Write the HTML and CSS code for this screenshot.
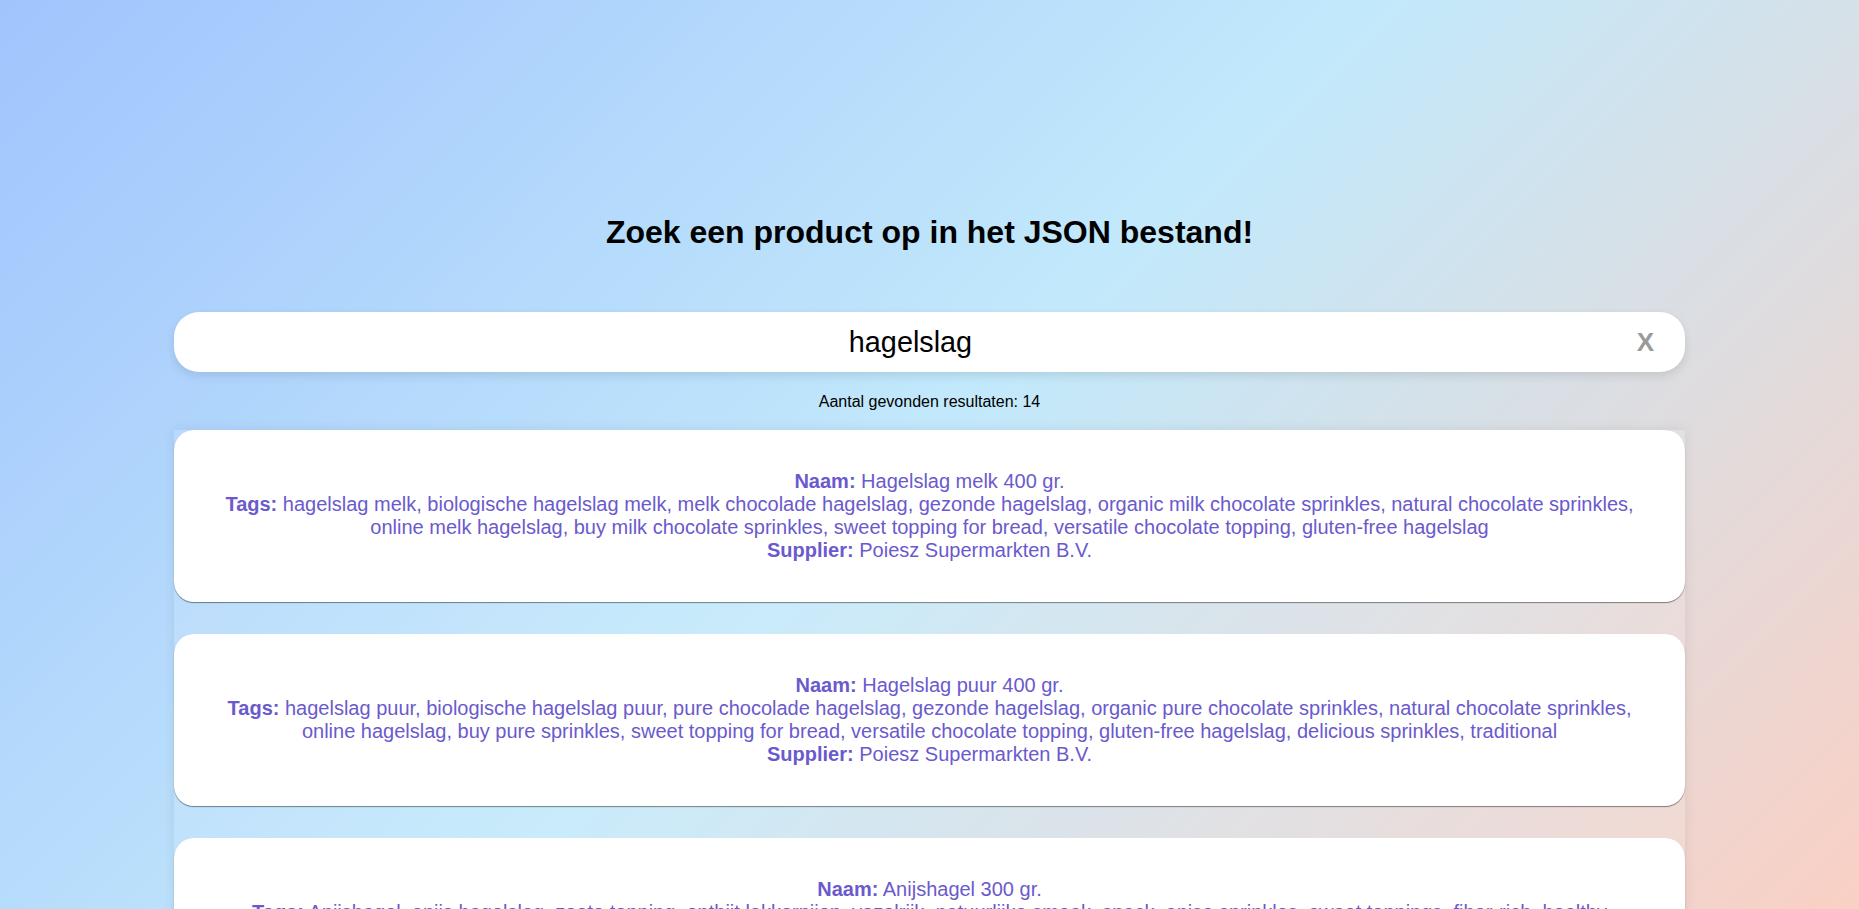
FILE: index.html
```html
<!DOCTYPE html>
<html lang="nl">
<head>
<meta charset="utf-8">
<title>Zoek een product</title>
<link rel="stylesheet" href="styles.css">
</head>
<body>
<main class="page">
  <h1 class="title">Zoek een product op in het JSON bestand!</h1>
  <div class="search">
    <input class="search-input" type="text" value="hagelslag">
    <button class="search-clear" type="button">X</button>
  </div>
  <p class="count">Aantal gevonden resultaten: 14</p>
  <div class="results">
    <div class="card">
      <strong>Naam:</strong> Hagelslag melk 400 gr.<br>
      <strong>Tags:</strong> hagelslag melk, biologische hagelslag melk, melk chocolade hagelslag, gezonde hagelslag, organic milk chocolate sprinkles, natural chocolate sprinkles, online melk hagelslag, buy milk chocolate sprinkles, sweet topping for bread, versatile chocolate topping, gluten-free hagelslag<br>
      <strong>Supplier:</strong> Poiesz Supermarkten B.V.
    </div>
    <div class="card">
      <strong>Naam:</strong> Hagelslag puur 400 gr.<br>
      <strong>Tags:</strong> hagelslag puur, biologische hagelslag puur, pure chocolade hagelslag, gezonde hagelslag, organic pure chocolate sprinkles, natural chocolate sprinkles, online hagelslag, buy pure sprinkles, sweet topping for bread, versatile chocolate topping, gluten-free hagelslag, delicious sprinkles, traditional<br>
      <strong>Supplier:</strong> Poiesz Supermarkten B.V.
    </div>
    <div class="card">
      <strong>Naam:</strong> Anijshagel 300 gr.<br>
      <strong>Tags:</strong> Anijshagel, anijs hagelslag, zoete topping, ontbijt lekkernijen, vezelrijk, natuurlijke smaak, snack, anise sprinkles, sweet toppings, fiber-rich, healthy breakfast, traditional Dutch topping<br>
      <strong>Supplier:</strong> Poiesz Supermarkten B.V.
    </div>
  </div>
</main>
</body>
</html>
```

FILE: styles.css
```css
html, body {
  margin: 0;
  padding: 0;
}

body {
  min-height: 100vh;
  font-family: "Liberation Sans", Arial, sans-serif;
  background: linear-gradient(135deg, #a1c4fd 0%, #c2e9fb 50%, #fad0c4 100%);
  background-attachment: fixed;
  color: #000;
}

.page {
  width: 1511px;
  margin: 0 auto;
  padding-top: 214px;
  display: flex;
  flex-direction: column;
}

.title {
  margin: 0;
  font-size: 32px;
  font-weight: bold;
  text-align: center;
  line-height: normal;
}

.search {
  position: relative;
  margin-top: 61px;
  height: 60px;
}

.search-input {
  box-sizing: border-box;
  width: 100%;
  height: 60px;
  border: none;
  outline: none;
  border-radius: 25px;
  background: #fff;
  font-family: "Liberation Sans", Arial, sans-serif;
  font-size: 28.8px;
  color: #000;
  text-align: center;
  padding: 0 79px 0 41px;
  box-shadow: 0 4px 10px rgba(0, 0, 0, 0.1);
}

.search-clear {
  position: absolute;
  right: 31px;
  top: 50%;
  transform: translateY(-50%);
  border: none;
  background: transparent;
  padding: 0;
  font-family: "Liberation Sans", Arial, sans-serif;
  font-size: 26px;
  font-weight: bold;
  color: #9a9a9a;
  cursor: pointer;
  line-height: 1;
}

.count {
  margin: 21px 0 19px;
  font-size: 16px;
  text-align: center;
  line-height: normal;
}

.results {
  display: flex;
  flex-direction: column;
  gap: 32px;
  background: rgba(255, 255, 255, 0.12);
  box-shadow: 0 0 12px rgba(0, 0, 0, 0.08);
  padding-bottom: 32px;
}

.card {
  background: #fff;
  border-radius: 20px;
  padding: 40px;
  text-align: center;
  font-size: 20px;
  line-height: 23px;
  color: #6a5acd;
  box-shadow: 0 1px 1px rgba(0, 0, 0, 0.45);
}

.card strong {
  font-weight: bold;
}
```
